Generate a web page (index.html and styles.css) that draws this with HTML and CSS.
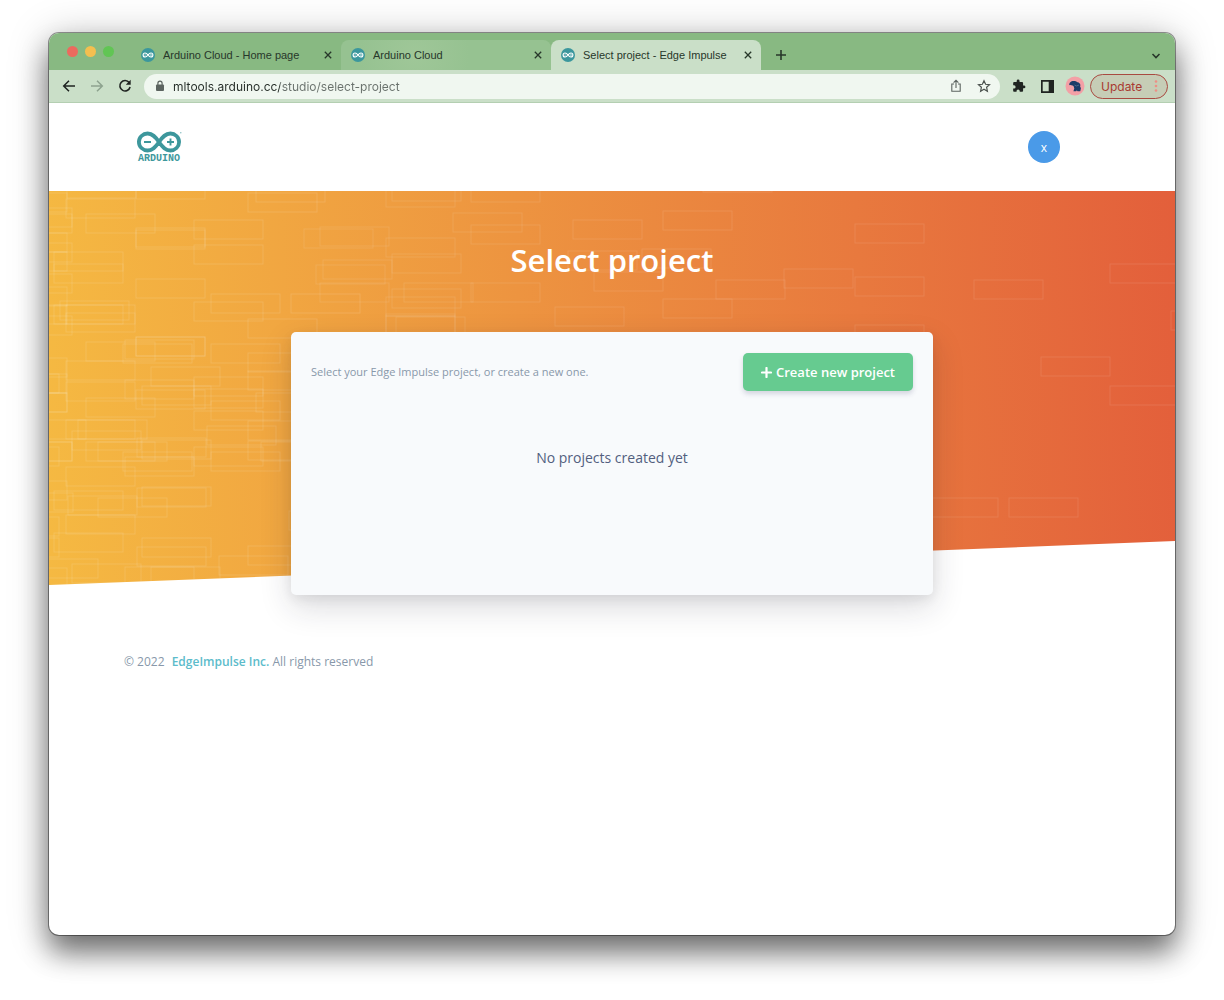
FILE: index.html
```html
<!DOCTYPE html>
<html lang="en">
<head>
<meta charset="utf-8">
<meta name="viewport" content="width=device-width, initial-scale=1">
<title>Select project - Edge Impulse</title>
<link rel="stylesheet" href="styles.css">
</head>
<body>
<svg class="defs" aria-hidden="true">
  <symbol id="favicon" viewBox="0 0 14 14">
    <circle cx="7" cy="7" r="7" fill="#3b979d"/>
    <path d="M7 7C5.900 5.600 5.200 5 4.100 5a2 2 0 0 0 0 4C5.200 9 5.900 8.400 7 7s1.800-2 2.900-2a2 2 0 0 1 0 4C8.800 9 8.100 8.400 7 7z" fill="none" stroke="#fff" stroke-width="1.100"/>
    <path d="M3.300 7h1.600M9.200 7h1.600M10 6.200v1.600" stroke="#fff" stroke-width=".6"/>
  </symbol>
  <symbol id="close" viewBox="0 0 8 8"><path d="M.8.8l6.400 6.400M7.200.8L.8 7.200" fill="none" stroke="currentColor" stroke-width="1.300"/></symbol>
</svg>
<div class="window">
  <div class="tabstrip">
    <div class="lights" aria-hidden="true"><i class="red"></i><i class="amber"></i><i class="green"></i></div>
    <div class="tab">
      <svg class="favicon"><use href="#favicon"/></svg><button class="tab-name">Arduino Cloud - Home page</button>
      <button class="tab-close" aria-label="Close tab"><svg><use href="#close"/></svg></button>
    </div>
    <div class="tab hovered">
      <svg class="favicon"><use href="#favicon"/></svg><button class="tab-name">Arduino Cloud</button>
      <button class="tab-close" aria-label="Close tab"><svg><use href="#close"/></svg></button>
    </div>
    <div class="tab active">
      <svg class="favicon"><use href="#favicon"/></svg><button class="tab-name">Select project - Edge Impulse</button>
      <button class="tab-close" aria-label="Close tab"><svg><use href="#close"/></svg></button>
    </div>
    <button class="new-tab" aria-label="New tab"><svg width="12" height="12" viewBox="0 0 12 12"><path d="M6 1v10M1 6h10" stroke="currentColor" stroke-width="1.600"/></svg></button>
    <button class="tab-list" aria-label="Search tabs"><svg width="10" height="8" viewBox="0 0 10 8"><path d="M1.500 2L5 5.600 8.500 2" fill="none" stroke="currentColor" stroke-width="1.500"/></svg></button>
  </div>
  <div class="toolbar">
    <button class="tool" aria-label="Back"><svg width="14" height="14" viewBox="0 0 14 14"><path d="M13 7H2M7 1.700L1.700 7 7 12.300" fill="none" stroke="#1f2421" stroke-width="1.500"/></svg></button>
    <button class="tool" aria-label="Forward"><svg width="14" height="14" viewBox="0 0 14 14"><path d="M1 7h11M7 1.700L12.300 7 7 12.300" fill="none" stroke="#8ea38f" stroke-width="1.500"/></svg></button>
    <button class="tool" aria-label="Reload"><svg width="14" height="14" viewBox="0 0 14 14"><path d="M11.200 3.600A5.200 5.200 0 1 0 12.100 8" fill="none" stroke="#1f2421" stroke-width="1.600"/><path d="M12.700.8v5H7.800z" fill="#1f2421"/></svg></button>
    <div class="address">
      <svg width="10" height="12" viewBox="0 0 10 12"><rect x="1" y="4.500" width="8" height="6.500" rx="1" fill="#5c6460"/><path d="M2.900 5V3.200a2.100 2.100 0 0 1 4.200 0V5" fill="none" stroke="#5c6460" stroke-width="1.200"/></svg>
      <input class="url" aria-label="Address" value="mltools.arduino.cc/studio/select-project">
      <button class="tool" aria-label="Share"><svg width="12" height="14" viewBox="0 0 12 14"><path d="M4 5H1.800v7.300h8.400V5H8M6 9V1.500M3.600 3.700L6 1.300l2.400 2.400" fill="none" stroke="#5c6460" stroke-width="1.100"/></svg></button>
      <button class="tool" aria-label="Bookmark"><svg width="14" height="14" viewBox="0 0 14 14"><path d="M7 1.700l1.600 3.600 3.900.4-2.900 2.600.8 3.900L7 10.200l-3.400 2 .8-3.900-2.900-2.600 3.900-.4z" fill="none" stroke="#4b524e" stroke-width="1.200"/></svg></button>
    </div>
    <button class="tool" aria-label="Extensions"><svg width="14" height="14" viewBox="0 0 24 24"><path d="M20.500 11H19V7c0-1.100-.9-2-2-2h-4V3.500a2.500 2.500 0 0 0-5 0V5H4c-1.100 0-2 .9-2 2v3.800h1.500a2.700 2.700 0 0 1 0 5.400H2V20c0 1.100.9 2 2 2h3.800v-1.500a2.700 2.700 0 0 1 5.400 0V22H17c1.100 0 2-.9 2-2v-4h1.500a2.500 2.500 0 0 0 0-5z" fill="#1f2421"/></svg></button>
    <button class="tool" aria-label="Side panel"><svg width="13" height="13" viewBox="0 0 13 13"><path d="M0 0h13v13H0zM1.700 1.700v9.600h6V1.700z" fill="#1f2421" fill-rule="evenodd"/></svg></button>
    <button class="tool" aria-label="Profile"><svg width="20" height="20" viewBox="0 0 20 20"><circle cx="10" cy="10" r="9.500" fill="#f3a0a6"/><path d="M4.300 9c-.3-2.200 1.600-4 4.200-4 1.800 0 3 .6 4 1.200 1.700.2 2.700 1.400 3 3l-.5.800.9 2.200-.6 3h-2.800l-.7-1-.6 1H8.400l.9-2.600-.8-2.500c-1.300-1-3-.8-4.200-1.100z" fill="#1c3c68"/><path d="M9.500 9l2 1 2.500-1" fill="none" stroke="#56718f" stroke-width=".8"/></svg></button>
    <button class="update">Update <svg width="4" height="14" viewBox="0 0 4 14" fill="#ee8f85"><circle cx="2" cy="2.500" r="1.300"/><circle cx="2" cy="7" r="1.300"/><circle cx="2" cy="11.500" r="1.300"/></svg></button>
  </div>
  <header class="container site-header">
    <a href="#" class="logo" aria-label="Arduino">
      <svg width="46" height="22" viewBox="0 0 46 22"><path d="M23 11C19.300 5.500 16.500 2.500 11.600 2.500a8.700 8.500 0 0 0 0 17C16.500 19.500 19.300 16.500 23 11s6.500-8.500 11.400-8.500a8.700 8.500 0 0 1 0 17C29.500 19.500 26.700 16.500 23 11z" fill="none" stroke="#3d979c" stroke-width="3.800"/><path d="M8 11h7M31 11h7M34.500 7.500v7" stroke="#3d979c" stroke-width="1.900"/><circle cx="44.800" cy="1.800" r=".7" fill="#7fbabd"/></svg>
      <span>ARDUINO</span>
    </a>
    <button class="user">x</button>
  </header>
  <main>
    <div class="backdrop" aria-hidden="true">
      <svg width="1126" height="394" viewBox="-1 0 1126 394" fill="none" stroke="#fff" stroke-opacity=".13">
        <defs><rect id="b" width="69" height="19"/></defs>
        <use href="#b" x="-52" y="2"/><use href="#b" x="-52" y="42"/><use href="#b" x="-52" y="61"/><use href="#b" x="-52" y="96"/><use href="#b" x="-52" y="114"/><use href="#b" x="-52" y="167"/><use href="#b" x="-52" y="183"/><use href="#b" x="-52" y="202"/><use href="#b" x="-52" y="202"/><use href="#b" x="-52" y="290"/><use href="#b" x="-52" y="377"/>
        <use href="#b" x="-47" y="17"/><use href="#b" x="-47" y="23"/><use href="#b" x="-47" y="52"/><use href="#b" x="-47" y="83"/><use href="#b" x="-47" y="125"/><use href="#b" x="-47" y="251"/><use href="#b" x="-47" y="251"/><use href="#b" x="-46" y="302"/>
        <use href="#b" x="-60" y="183"/><use href="#b" x="-60" y="256"/><use href="#b" x="-60" y="326"/><use href="#b" x="-60" y="347"/><use href="#b" x="-33" y="229"/><use href="#b" x="-21" y="368"/>
        <use href="#b" x="17" y="-12"/><use href="#b" x="16" y="8"/><use href="#b" x="4" y="61"/><use href="#b" x="4" y="73"/><use href="#b" x="10" y="110"/><use href="#b" x="4" y="114"/><use href="#b" x="16" y="114"/><use href="#b" x="16" y="122"/><use href="#b" x="16" y="170"/><use href="#b" x="16" y="191"/><use href="#b" x="16" y="229"/><use href="#b" x="28" y="229"/><use href="#b" x="22" y="240"/><use href="#b" x="16" y="276"/><use href="#b" x="4" y="300"/><use href="#b" x="18" y="305"/><use href="#b" x="16" y="324"/><use href="#b" x="4" y="342"/><use href="#b" x="22" y="373"/>
        <use href="#b" x="36" y="23"/><use href="#b" x="36" y="151"/><use href="#b" x="36" y="207"/><use href="#b" x="36" y="251"/><use href="#b" x="48" y="251"/><use href="#b" x="48" y="307"/>
        <use href="#b" x="86" y="-11"/><use href="#b" x="86" y="37"/><use href="#b" x="86" y="39"/><use href="#b" x="86" y="88"/><use href="#b" x="86" y="146"/><use href="#b" x="86" y="146"/><use href="#b" x="75" y="149"/><use href="#b" x="73" y="153"/><use href="#b" x="101" y="176"/><use href="#b" x="75" y="189"/><use href="#b" x="92" y="195"/><use href="#b" x="86" y="199"/><use href="#b" x="87" y="247"/><use href="#b" x="92" y="249"/><use href="#b" x="73" y="261"/><use href="#b" x="75" y="266"/><use href="#b" x="87" y="297"/><use href="#b" x="92" y="296"/><use href="#b" x="92" y="347"/><use href="#b" x="87" y="356"/><use href="#b" x="75" y="376"/><use href="#b" x="101" y="376"/>
        <use href="#b" x="144" y="29"/><use href="#b" x="144" y="54"/><use href="#b" x="144" y="111"/><use href="#b" x="161" y="103"/><use href="#b" x="161" y="153"/><use href="#b" x="144" y="186"/><use href="#b" x="144" y="198"/><use href="#b" x="161" y="210"/><use href="#b" x="144" y="220"/><use href="#b" x="157" y="235"/><use href="#b" x="144" y="256"/><use href="#b" x="161" y="261"/><use href="#b" x="169" y="365"/>
        <use href="#b" x="198" y="2"/><use href="#b" x="206" y="-8"/><use href="#b" x="241" y="103"/><use href="#b" x="198" y="128"/><use href="#b" x="198" y="162"/><use href="#b" x="198" y="180"/><use href="#b" x="206" y="202"/><use href="#b" x="198" y="230"/><use href="#b" x="198" y="250"/><use href="#b" x="211" y="251"/><use href="#b" x="239" y="320"/><use href="#b" x="198" y="355"/>
        <g stroke-opacity=".1">
        <use href="#b" x="336" y="-3"/><use href="#b" x="342" y="-9"/><use href="#b" x="421" y="-8"/><use href="#b" x="403" y="22"/><use href="#b" x="421" y="34"/><use href="#b" x="270" y="36"/><use href="#b" x="254" y="38"/><use href="#b" x="336" y="47"/><use href="#b" x="342" y="63"/><use href="#b" x="273" y="69"/><use href="#b" x="266" y="74"/><use href="#b" x="270" y="92"/><use href="#b" x="354" y="92"/><use href="#b" x="421" y="92"/><use href="#b" x="342" y="98"/><use href="#b" x="336" y="106"/><use href="#b" x="336" y="123"/><use href="#b" x="336" y="125"/><use href="#b" x="346" y="126"/><use href="#b" x="523" y="29"/><use href="#b" x="518" y="60"/><use href="#b" x="544" y="81"/><use href="#b" x="505" y="116"/>
        <use href="#b" x="653" y="-18"/><use href="#b" x="613" y="20"/><use href="#b" x="592" y="58"/><use href="#b" x="666" y="89"/><use href="#b" x="613" y="108"/><use href="#b" x="734" y="78"/><use href="#b" x="805" y="33"/><use href="#b" x="805" y="86"/><use href="#b" x="805" y="134"/>
        <use href="#b" x="924" y="89"/><use href="#b" x="1060" y="73"/><use href="#b" x="1121" y="120"/><use href="#b" x="991" y="166"/><use href="#b" x="1060" y="195"/><use href="#b" x="879" y="307"/><use href="#b" x="959" y="307"/>
        </g>
      </svg>
    </div>
    <h1>Select project</h1>
    <section class="card">
      <div class="card-head">
        <p>Select your Edge Impulse project, or create a new one.</p>
        <button class="create"><svg width="11" height="11" viewBox="0 0 11 11"><path d="M5.500 1v9M1 5.500h9" stroke="#fff" stroke-width="2.200" stroke-linecap="round"/></svg>Create new project</button>
      </div>
      <p class="empty">No projects created yet</p>
    </section>
  </main>
  <footer class="container site-footer">© 2022 <a href="#">EdgeImpulse Inc.</a> All rights reserved</footer>
</div>
</body>
</html>
```
FILE: styles.css
```css
* { box-sizing: border-box; }
body {
  margin: 0;
  min-height: 100vh;
  padding: 33px 49px 65px;
  display: flex;
  background: #fff;
  font-family: "Open Sans", sans-serif;
  color: #525f7f;
  overflow-x: hidden;
}
button { font: inherit; color: inherit; background: none; border: 0; padding: 0; cursor: pointer; }
p, h1 { margin: 0; }
svg { display: block; flex: none; }
.defs { position: absolute; width: 0; height: 0; }

.window {
  flex: 1;
  min-width: 0;
  overflow: hidden;
  border-radius: 10px;
  background: #fff;
  box-shadow: 0 0 0 1px rgba(0, 0, 0, .4), 0 18px 28px rgba(0, 0, 0, .48), 0 4px 40px rgba(0, 0, 0, .26);
}

/* Browser chrome */
.tabstrip {
  display: flex;
  align-items: flex-end;
  height: 37px;
  padding: 0 14px 0 18px;
  background: #88b982;
  color: #27372a;
  font-family: "Liberation Sans", sans-serif;
  font-size: 11px;
}
.lights { display: flex; gap: 7px; width: 64px; align-self: center; flex: none; }
.lights i { width: 11px; height: 11px; border-radius: 50%; }
.red { background: #ec6a5e; }
.amber { background: #f4bf4f; }
.green { background: #61c554; }
.tab {
  flex: 0 1 210px;
  min-width: 0;
  display: flex;
  align-items: center;
  height: 30px;
  padding: 0 9px 0 10px;
  border-radius: 8px 8px 0 0;
}
.tab.hovered { background: radial-gradient(circle at 35% 50%, #9fc798, #96c291 40%); }
.tab.active { background: #cadfc8; }
.favicon { width: 14px; height: 14px; margin-right: 8px; }
.tab-name { flex: 1; min-width: 0; overflow: hidden; text-align: left; white-space: nowrap; }
.tab-close svg { width: 8px; height: 8px; }
.new-tab { margin: 0 auto 9px 14px; }
.tab-list { margin-bottom: 10px; }

.toolbar {
  display: flex;
  align-items: center;
  gap: 8px;
  height: 33px;
  padding: 0 7px 0 10px;
  background: #cadfc8;
  border-bottom: 1px solid #b4cfb2;
  font-family: Inter, sans-serif;
}
.tool { width: 20px; height: 20px; display: grid; place-items: center; flex: none; }
.address {
  flex: 1;
  min-width: 0;
  display: flex;
  align-items: center;
  gap: 8px;
  height: 25px;
  margin: 0 1px;
  padding: 0 6px 0 11px;
  border-radius: 13px;
  background: #f0f7f0;
}
.url {
  flex: 1;
  min-width: 0;
  border: 0;
  padding: 0;
  outline: 0;
  font: 12px Inter, sans-serif;
  color: transparent;
  background: linear-gradient(90deg, #252d28 107px, #69716c 107px);
  background-clip: text;
  -webkit-background-clip: text;
}
.update {
  display: flex;
  align-items: center;
  justify-content: space-between;
  flex: none;
  width: 78px;
  height: 25px;
  margin-left: -3px;
  padding: 0 9px 0 10px;
  border: 1px solid #a94a41;
  border-radius: 13px;
  background: #c6cdb6;
  color: #a93a31;
  font-size: 12px;
}

/* Page */
.container { width: 100%; max-width: 1000px; margin: 0 auto; }
.site-header {
  display: flex;
  align-items: center;
  justify-content: space-between;
  height: 88px;
  padding: 0 52px 0 24px;
}
.logo { display: flex; flex-direction: column; align-items: center; color: #3d979c; text-decoration: none; }
.logo span { font: bold 10px/11px "Liberation Mono", monospace; }
.user { width: 32px; height: 32px; border-radius: 50%; background: #4a9ae8; color: #fff; font-size: 12px; }

main { position: relative; padding: 47px 20px 0; }
.backdrop {
  position: absolute;
  inset: 0 0 auto;
  height: 394px;
  overflow: hidden;
  background: linear-gradient(88deg, #f5b942, #ed9440 42%, #e8793e 72%, #e35f3b);
  clip-path: polygon(0 0, 100% 0, 100% calc(100% - 44px), 0 100%);
}
h1 { position: relative; color: #fff; font-size: 31px; line-height: 44px; font-weight: 600; text-align: center; }
.card {
  position: relative;
  max-width: 642px;
  min-height: 263px;
  margin: 50px auto 0;
  padding: 21px 20px;
  border-radius: 5px;
  background: #f8fafc;
  box-shadow: 0 12px 32px rgba(30, 30, 50, .16), 0 4px 12px rgba(0, 0, 0, .07);
}
.card-head { display: flex; align-items: center; justify-content: space-between; color: #8898aa; font-size: 11px; line-height: 16px; }
.create {
  display: flex;
  align-items: center;
  justify-content: center;
  gap: 4px;
  width: 170px;
  height: 38px;
  border-radius: 5px;
  background: #66cb90;
  box-shadow: 0 3px 5px rgba(50, 50, 93, .18);
  color: #fff;
  font-size: 13px;
  font-weight: 600;
}
.empty { margin-top: 56px; font-size: 14px; line-height: 22px; text-align: center; }
.site-footer { padding: 57px 12px 24px; font-size: 12px; line-height: 20px; color: #8898aa; }
.site-footer a { margin-left: 4px; color: #5cbccb; font-weight: 600; text-decoration: none; }
```
